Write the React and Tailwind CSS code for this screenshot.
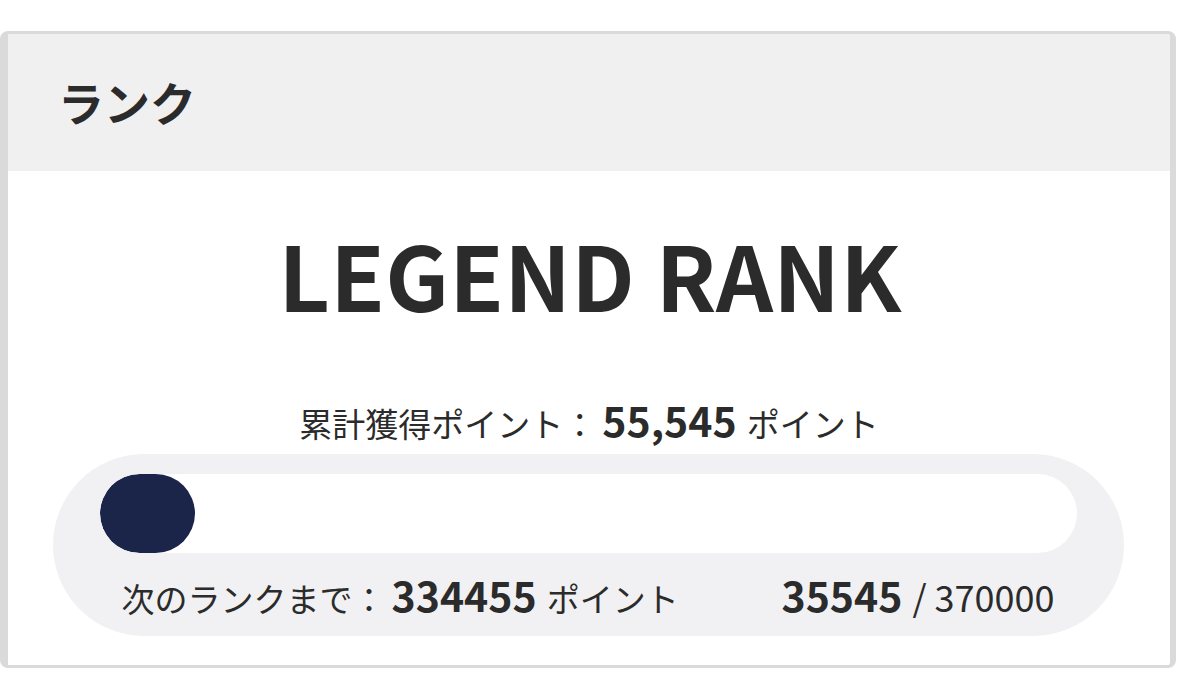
export default function App() {
  const current = 35545;
  const goal = 370000;

  return (
    <div
      className="w-[1178px] h-[698px] bg-white pt-[31px]"
      style={{ fontFamily: '"Noto Sans CJK JP", "Noto Sans", sans-serif' }}
    >
      <div className="w-[1176px] h-[637px] border-[#dadada] border-t-[3px] border-b-[3px] border-l-[8px] border-r-[6px] rounded-[8px] overflow-hidden flex flex-col text-[#2b2b2b]">
        {/* ヘッダー */}
        <div className="h-[137px] bg-[#f1f0f0] flex items-center pl-[50px] pb-[4px] shrink-0">
          <h2 className="text-[46px] font-bold leading-none">ランク</h2>
        </div>

        <div className="flex-1 bg-white flex flex-col items-center">
          <div className="mt-[50px] text-[89px] font-bold leading-[106px] tracking-[0.3px] pl-[2px]">
            LEGEND RANK
          </div>

          <div className="mt-[72px] flex items-baseline leading-none">
            <span className="text-[33px]">累計獲得ポイント：</span>
            <span className="text-[41px] font-bold ml-[6px]">55,545</span>
            <span className="text-[33px] ml-[10px]">ポイント</span>
          </div>

          {/* プログレス */}
          <div className="mt-[14px] ml-[-2px] w-[1071px] h-[182px] rounded-full bg-[#f1f1f3] px-[47px] pt-[20px]">
            <div className="h-[79px] w-full rounded-full bg-white overflow-hidden">
              <div
                className="h-full rounded-full bg-[#1b2549] min-w-[95px]"
                style={{ width: `${(current / goal) * 0}%` }}
              />
            </div>
            <div className="mt-[21px] flex items-baseline justify-between leading-none pl-[22px] pr-[22px]">
              <div className="flex items-baseline">
                <span className="text-[33px]">次のランクまで：</span>
                <span className="text-[41px] font-bold ml-[6px]">334455</span>
                <span className="text-[33px] ml-[10px]">ポイント</span>
              </div>
              <div className="flex items-baseline">
                <span className="text-[41px] font-bold">35545</span>
                <span className="text-[36px] ml-[10px]">/ 370000</span>
              </div>
            </div>
          </div>
        </div>
      </div>
    </div>
  );
}
